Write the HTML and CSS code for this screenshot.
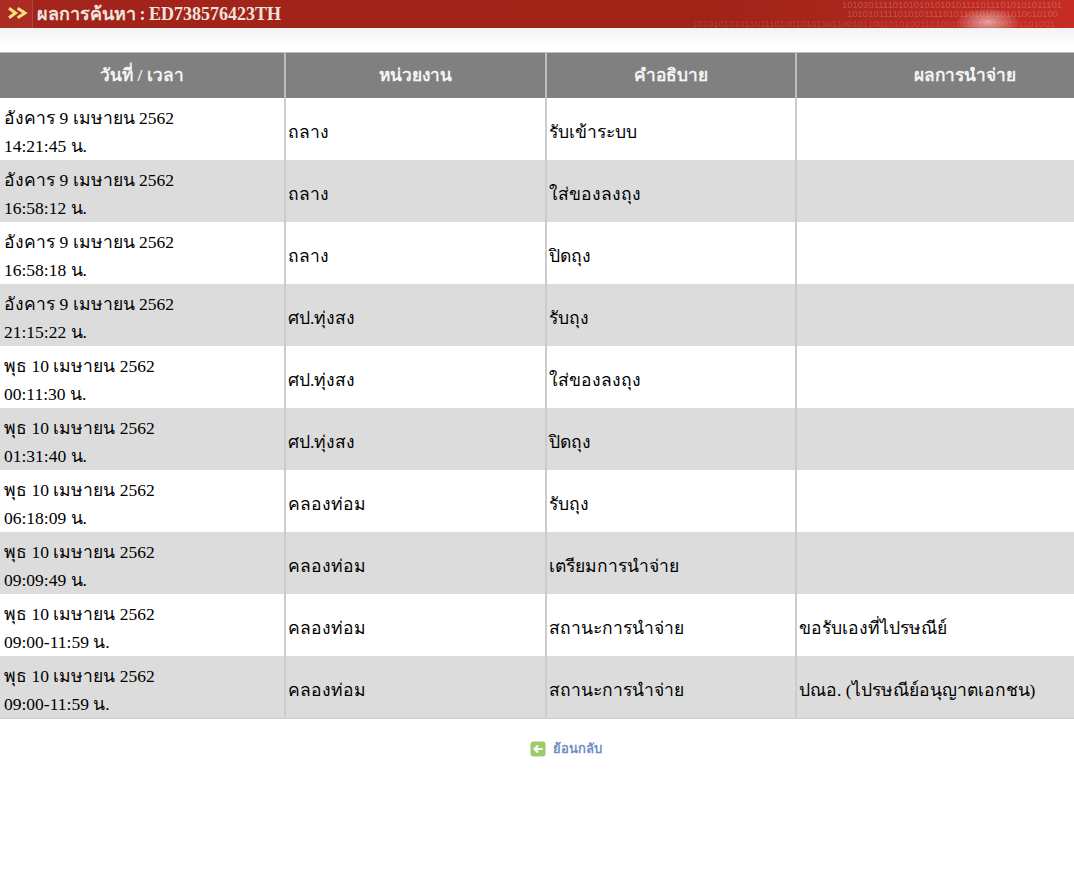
FILE: index.html
```html
<!DOCTYPE html>
<html lang="th">
<head>
<meta charset="utf-8">
<title>ผลการค้นหา</title>
<link rel="stylesheet" href="styles.css">
</head>
<body>
<header class="banner">
  <span class="chev-box">
    <svg class="chev" width="21" height="12" viewBox="0 0 24 14"><path d="M1 1.500L8.500 7L1 12.500M11 1.500L19.500 7L11 12.500" fill="none" stroke="#f6e27a" stroke-width="3.500"/></svg>
  </span>
  <h1 class="banner-title">ผลการค้นหา : ED738576423TH</h1>
  <div class="binary" aria-hidden="true">
    <div class="b1">1010201111010101010101011110111010101011101</div>
    <div class="b2">10101011110101011110101101010101010c10100</div>
    <div class="b3">1010101010110111010010101101100101100101010011010010110110100101101001</div>
  </div>
  <div class="map" aria-hidden="true"></div>
</header>
<div class="fade"></div>
<div class="table-wrap">
<table class="track">
  <thead>
    <tr><th>วันที่ / เวลา</th><th>หน่วยงาน</th><th>คำอธิบาย</th><th>ผลการนำจ่าย</th></tr>
  </thead>
  <tbody>
    <tr><td>อังคาร 9 เมษายน 2562<br>14:21:45 น.</td><td>ถลาง</td><td>รับเข้าระบบ</td><td></td></tr>
    <tr><td>อังคาร 9 เมษายน 2562<br>16:58:12 น.</td><td>ถลาง</td><td>ใส่ของลงถุง</td><td></td></tr>
    <tr><td>อังคาร 9 เมษายน 2562<br>16:58:18 น.</td><td>ถลาง</td><td>ปิดถุง</td><td></td></tr>
    <tr><td>อังคาร 9 เมษายน 2562<br>21:15:22 น.</td><td>ศป.ทุ่งสง</td><td>รับถุง</td><td></td></tr>
    <tr><td>พุธ 10 เมษายน 2562<br>00:11:30 น.</td><td>ศป.ทุ่งสง</td><td>ใส่ของลงถุง</td><td></td></tr>
    <tr><td>พุธ 10 เมษายน 2562<br>01:31:40 น.</td><td>ศป.ทุ่งสง</td><td>ปิดถุง</td><td></td></tr>
    <tr><td>พุธ 10 เมษายน 2562<br>06:18:09 น.</td><td>คลองท่อม</td><td>รับถุง</td><td></td></tr>
    <tr><td>พุธ 10 เมษายน 2562<br>09:09:49 น.</td><td>คลองท่อม</td><td>เตรียมการนำจ่าย</td><td></td></tr>
    <tr><td>พุธ 10 เมษายน 2562<br>09:00-11:59 น.</td><td>คลองท่อม</td><td>สถานะการนำจ่าย</td><td>ขอรับเองที่ไปรษณีย์</td></tr>
    <tr><td>พุธ 10 เมษายน 2562<br>09:00-11:59 น.</td><td>คลองท่อม</td><td>สถานะการนำจ่าย</td><td>ปณอ. (ไปรษณีย์อนุญาตเอกชน)</td></tr>
  </tbody>
</table>
</div>
<div class="back-row">
  <a class="back" href="#">
    <svg class="back-icon" width="16" height="16" viewBox="0 0 16 16"><rect x="0.500" y="0.500" width="15" height="15" rx="3" fill="#9ccb6b"/><path d="M12.500 8H5M8 4.500L4.500 8L8 11.500" fill="none" stroke="#fff" stroke-width="2"/></svg>
    <span>ย้อนกลับ</span>
  </a>
</div>
</body>
</html>
```
FILE: styles.css
```css
html, body { margin: 0; padding: 0; background: #fff; }
body { height: 873px; overflow: hidden; font-family: "Liberation Serif", serif; color: #000; }

.banner { position: relative; height: 28px; display: flex; align-items: center; overflow: hidden;
  background: linear-gradient(90deg, #a3241a 0%, #a02318 65%, #a8261c 78%, #c02a22 92%, #c42c24 100%); }
.chev-box { width: 33px; height: 28px; display: flex; align-items: center; justify-content: center; background: #aa2c24; border-right: 1px solid #b4443c; box-sizing: border-box; flex: none; }
.chev { filter: blur(.4px); margin-top: -3px; margin-left: 4px; }
.banner-title { margin: 0 0 0 4px; font-size: 18px; font-weight: bold; color: #efe3df; white-space: nowrap; word-spacing: -1px; position: relative; top: -1px; }
.binary { position: absolute; right: 0; top: 0; width: 390px; height: 28px; font: 9.5px/9px "Liberation Sans", sans-serif; color: rgba(255,255,255,.2); white-space: nowrap; filter: blur(.4px); }
.b1 { margin-left: 158px; }
.b2 { margin-left: 163px; }
.b3 { margin: 1px 0 0 8px; color: rgba(255,255,255,.13); }
.map { position: absolute; left: 955px; top: 8px; width: 65px; height: 28px; border-radius: 50%; background: radial-gradient(closest-side, rgba(255,255,255,.55), rgba(255,255,255,0)); }

.fade { height: 24px; background: linear-gradient(#f3f3f3, #fff 70%); }

.table-wrap { width: 1074px; overflow: hidden; }
.track { width: 1134px; border-collapse: collapse; table-layout: fixed; font-size: 17.5px; line-height: 28px; }
.track th:nth-child(1) { width: 285px; }
.track th:nth-child(2) { width: 261px; }
.track th:nth-child(3) { width: 250px; }
.track th { height: 45px; box-sizing: border-box; padding: 2px 0 0; background: #808080; color: #f4f4f4; font-size: 17.3px; font-weight: bold; text-align: center; border: 1px solid #bdbdbd; border-width: 1px 2px 0 0; }
.track td { height: 62px; box-sizing: border-box; padding: 6px 3px 0 2px; vertical-align: middle; border-right: 2px solid #ccc; }
.track td:first-child { padding-left: 4px; }
.track tbody tr:nth-child(even) td { background: #dcdcdc; }
.track tbody tr:last-child td { border-bottom: 1px solid #ccc; }

.back-row { display: flex; justify-content: center; padding-top: 22px; }
.back { display: inline-flex; align-items: center; gap: 7px; margin-left: 58px; text-decoration: none; color: #6f8fc0; font: bold 13px/16px "Liberation Serif", serif; }
.back-icon { flex: none; }
```
